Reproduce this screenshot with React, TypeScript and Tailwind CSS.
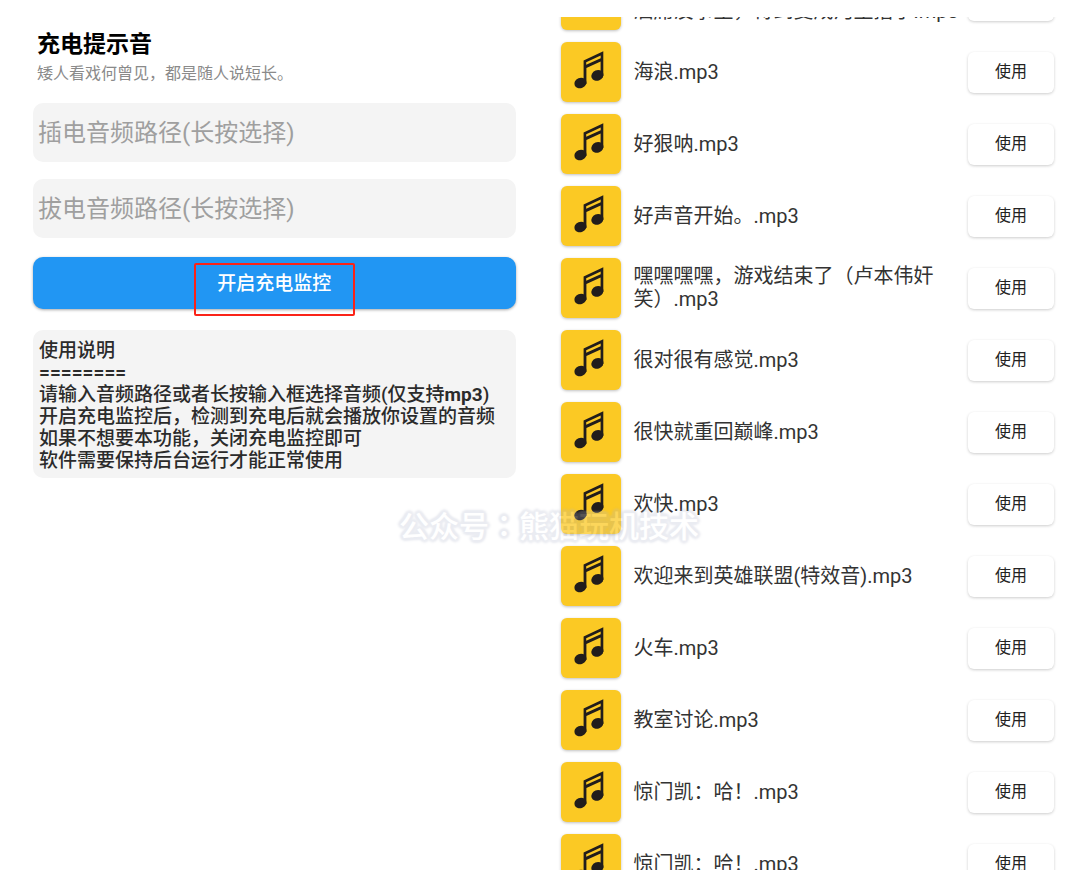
// The leading line break keeps the first, two-line title on its second line
const tracks = [
  "\n酒席没事里，得到变成河里捂子.mp3",
  "海浪.mp3",
  "好狠呐.mp3",
  "好声音开始。.mp3",
  "嘿嘿嘿嘿，游戏结束了（卢本伟奸笑）.mp3",
  "很对很有感觉.mp3",
  "很快就重回巅峰.mp3",
  "欢快.mp3",
  "欢迎来到英雄联盟(特效音).mp3",
  "火车.mp3",
  "教室讨论.mp3",
  "惊门凯：哈！.mp3",
  "惊门凯：哈！.mp3",
];

function MusicIcon() {
  return (
    <svg viewBox="0 0 60 60" className="h-[60px] w-[60px]" aria-hidden="true">
      <g fill="#211d1c">
        <path
          fillRule="evenodd"
          d="M22.6 18.4 L42.3 9.2 V34 H39.6 V19.6 L25.4 26 V42 H22.6 Z M25.2 20.2 V22.8 L39.7 16.3 V13.5 Z"
        />
        <ellipse cx="19.4" cy="41" rx="6.2" ry="5.2" transform="rotate(-22 19.4 41)" />
        <ellipse cx="36.4" cy="33.4" rx="6.2" ry="5.2" transform="rotate(-22 36.4 33.4)" />
      </g>
    </svg>
  );
}

function TrackRow({ name }: { name: string }) {
  return (
    <li className="flex h-[72px] shrink-0 items-center">
      <div className="h-[60px] w-[60px] shrink-0 rounded-md bg-[#fbc924] shadow-[0_1px_3px_rgba(0,0,0,0.25)]">
        <MusicIcon />
      </div>
      <p className="ml-[13px] min-w-0 flex-1 text-[20px] leading-[23px] whitespace-pre-line text-[#333]">{name}</p>
      <button
        type="button"
        className="ml-2 h-[41px] w-[86px] shrink-0 rounded-md bg-white text-[16px] text-[#222] shadow-[0_1px_3px_rgba(0,0,0,0.2)]"
      >
        使用
      </button>
    </li>
  );
}

export default function App() {
  return (
    <div className="relative flex h-screen gap-[45px] overflow-hidden bg-white py-[17px] pr-[26px] pl-[33px] font-[Roboto,'Noto_Sans_CJK_SC',sans-serif]">
      <main className="min-w-0 flex-[483]">
        <header className="px-1 pt-[13px]">
          <h1 className="text-[23px] leading-[30px] font-bold text-black">充电提示音</h1>
          <p className="text-[16px] leading-[28px] text-[#8a8a8a]">矮人看戏何曾见，都是随人说短长。</p>
        </header>

        <form className="mt-[15px] flex flex-col">
          <input
            type="text"
            aria-label="插电音频路径"
            placeholder="插电音频路径(长按选择)"
            className="h-[59px] w-full rounded-[10px] bg-[#f4f4f4] px-[5px] text-[24px] placeholder:text-[#9f9f9f]"
          />
          <input
            type="text"
            aria-label="拔电音频路径"
            placeholder="拔电音频路径(长按选择)"
            className="mt-[17px] h-[59px] w-full rounded-[10px] bg-[#f4f4f4] px-[5px] text-[24px] placeholder:text-[#9f9f9f]"
          />
          <div className="relative mt-[19px]">
            <button
              type="button"
              className="h-[52px] w-full rounded-[10px] bg-[#2196f3] pt-0.5 text-[19px] font-medium text-white shadow-[0_1px_3px_rgba(0,0,0,0.35)]"
            >
              开启充电监控
            </button>
            {/* Highlight frame around the label */}
            <div className="pointer-events-none absolute top-[6px] left-1/3 h-[53px] w-1/3 rounded-[2px] border-2 border-[#fa2318]" />
          </div>
        </form>

        <section className="mt-[21px] rounded-[10px] bg-[#f4f4f4] px-[6px] pt-[10px] pb-[6px] text-[19px] leading-[22px] font-medium text-[#2b2b2b]">
          <h2>使用说明</h2>
          <p className="font-bold">========</p>
          <p>
            请输入音频路径或者长按输入框选择音频(仅支持<b>mp3</b>)
          </p>
          <p>开启充电监控后，检测到充电后就会播放你设置的音频</p>
          <p>如果不想要本功能，关闭充电监控即可</p>
          <p>软件需要保持后台运行才能正常使用</p>
        </section>
      </main>

      <aside className="-mx-2 min-w-0 flex-[494] overflow-hidden px-2">
        <ul className="-mt-[53px] flex flex-col">
          {tracks.map((name, i) => (
            <TrackRow key={i} name={name} />
          ))}
        </ul>
      </aside>

      {/* Watermark */}
      <div className="pointer-events-none absolute top-[502px] left-[399px] text-[30px] leading-[44px] font-medium whitespace-nowrap text-white opacity-25 [text-shadow:3px_0_2px_#b0b6cc,-3px_0_2px_#b0b6cc,0_3px_2px_#b0b6cc,0_-3px_2px_#b0b6cc,2px_2px_2px_#b0b6cc,-2px_2px_2px_#b0b6cc,2px_-2px_2px_#b0b6cc,-2px_-2px_2px_#b0b6cc]">
        公众号<span className="font-['Noto_Sans_CJK_JP',sans-serif]">：</span>熊猫玩机技术
      </div>
    </div>
  );
}
